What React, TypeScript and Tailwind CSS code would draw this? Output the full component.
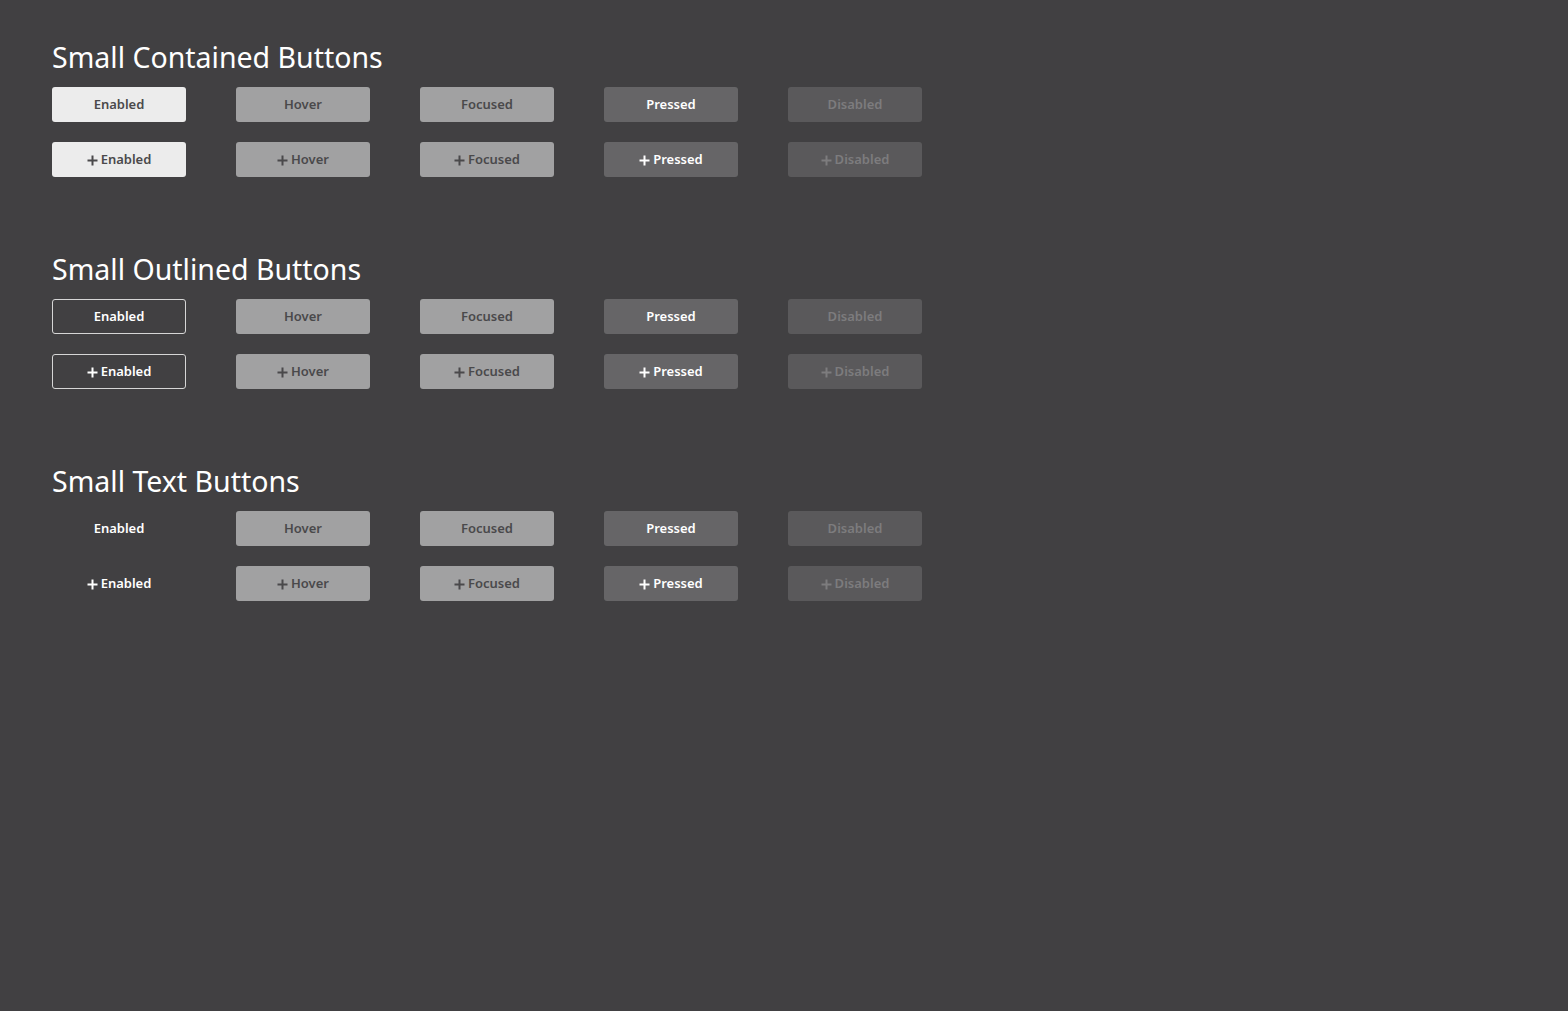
const STATES = ["Hover", "Focused", "Pressed", "Disabled"] as const;

const STATE_CLASS: Record<string, string> = {
  Hover: "bg-[#a1a1a2] text-[#4a494b]",
  Focused: "bg-[#a1a1a2] text-[#4a494b]",
  Pressed: "bg-[#666567] text-white",
  Disabled: "bg-[#5a595b] text-[#7d7c7e]",
};

const ENABLED_CLASS: Record<string, string> = {
  contained: "bg-[#ececec] text-[#4a494b]",
  outlined: "border border-[#d6d6d6] text-white",
  text: "text-white",
};

function Plus() {
  return (
    <svg width="11" height="11" viewBox="0 0 11 11" className="mr-[3px]">
      <path d="M5.5 0.5v10M0.5 5.5h10" stroke="currentColor" strokeWidth="2" fill="none" />
    </svg>
  );
}

function Btn({ label, cls, icon }: { label: string; cls: string; icon: boolean }) {
  return (
    <div
      className={`flex h-[35px] w-[134px] items-center justify-center rounded-[3px] pt-px text-[13px] font-semibold ${cls}`}
    >
      {icon && <Plus />}
      {label}
    </div>
  );
}

function Section({ title, kind }: { title: string; kind: string }) {
  return (
    <section className="mb-[72px]">
      <h2 className="mb-[10px] h-[40px] text-[28.5px] leading-[40px] text-white">{title}</h2>
      <div className="flex flex-col gap-[20px]">
        {[false, true].map((icon) => (
          <div key={String(icon)} className="flex gap-[50px]">
            <Btn label="Enabled" cls={ENABLED_CLASS[kind]} icon={icon} />
            {STATES.map((s) => (
              <Btn key={s} label={s} cls={STATE_CLASS[s]} icon={icon} />
            ))}
          </div>
        ))}
      </div>
    </section>
  );
}

export default function App() {
  return (
    <main
      className="min-h-screen bg-[#414042] px-[52px] pt-[37px]"
      style={{ fontFamily: "'Noto Sans', 'Open Sans', sans-serif" }}
    >
      <Section title="Small Contained Buttons" kind="contained" />
      <Section title="Small Outlined Buttons" kind="outlined" />
      <Section title="Small Text Buttons" kind="text" />
    </main>
  );
}
